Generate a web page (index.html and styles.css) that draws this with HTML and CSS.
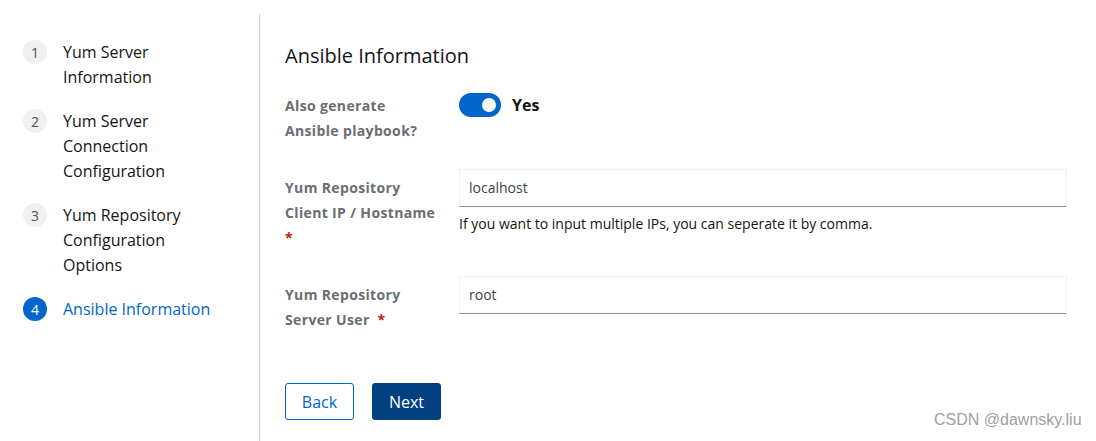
FILE: index.html
```html
<!DOCTYPE html>
<html>
<head>
<meta charset="utf-8">
<link rel="stylesheet" href="styles.css">
</head>
<body>
<div class="wizard">
  <nav class="nav">
    <ol class="steps">
      <li class="step"><span class="num">1</span><span class="label">Yum Server<br>Information</span></li>
      <li class="step"><span class="num">2</span><span class="label">Yum Server<br>Connection<br>Configuration</span></li>
      <li class="step"><span class="num">3</span><span class="label">Yum Repository<br>Configuration<br>Options</span></li>
      <li class="step current"><span class="num">4</span><span class="label">Ansible Information</span></li>
    </ol>
  </nav>
  <main class="main">
    <h1 class="title">Ansible Information</h1>
    <div class="row row-toggle">
      <div class="flabel">Also generate<br>Ansible playbook?</div>
      <div class="control toggle-wrap">
        <span class="toggle"><span class="knob"></span></span>
        <span class="yes">Yes</span>
      </div>
    </div>
    <div class="row">
      <div class="flabel pad">Yum Repository<br>Client IP / Hostname<br><span class="req">*</span></div>
      <div class="control">
        <div class="input">localhost</div>
        <div class="helper">If you want to input multiple IPs, you can seperate it by comma.</div>
      </div>
    </div>
    <div class="row">
      <div class="flabel pad">Yum Repository<br>Server User &nbsp;<span class="req">*</span></div>
      <div class="control">
        <div class="input">root</div>
      </div>
    </div>
    <div class="actions">
      <button class="btn btn-back">Back</button>
      <button class="btn btn-next">Next</button>
    </div>
  </main>
</div>
<div class="watermark">CSDN @dawnsky.liu</div>
</body>
</html>
```
FILE: styles.css
```css
html, body {
  margin: 0;
  padding: 0;
  background: #fff;
  font-family: "Open Sans", "Liberation Sans", sans-serif;
  color: #151515;
}
.wizard {
  display: flex;
  height: 441px;
  padding-top: 14px;
  box-sizing: border-box;
}
.nav {
  width: 260px;
  border-right: 1px solid #d2d2d2;
  padding-top: 26px;
  box-sizing: border-box;
  flex: none;
}
.steps {
  list-style: none;
  margin: 0;
  padding: 0 0 0 23px;
  display: flex;
  flex-direction: column;
  gap: 19px;
}
.step {
  display: flex;
  align-items: flex-start;
  gap: 16px;
  font-size: 16px;
  line-height: 25px;
  color: #151515;
}
.num {
  width: 24px;
  height: 24px;
  border-radius: 50%;
  background: #f0f0f0;
  color: #4f5255;
  font-size: 14px;
  display: flex;
  align-items: center;
  justify-content: center;
  flex: none;
}
.step.current { color: #0066cc; }
.step.current .num { background: #0066cc; color: #fff; }
.main {
  flex: 1;
  padding: 27px 29px 0 25px;
}
.title {
  margin: 0 0 22px;
  font-size: 20px;
  line-height: 30px;
  font-weight: 400;
}
.row {
  display: grid;
  grid-template-columns: 174px 1fr;
  margin-bottom: 26px;
}
.flabel {
  font-size: 14px;
  font-weight: 700;
  line-height: 25px;
  letter-spacing: 0.35px;
  color: #6a6e73;
}
.flabel.pad { padding-top: 6px; }
.req { color: #c9190b; }
.toggle-wrap {
  display: flex;
  align-items: flex-start;
  gap: 11px;
}
.toggle {
  width: 42px;
  height: 24px;
  border-radius: 12px;
  background: #0066cc;
  position: relative;
  flex: none;
}
.knob {
  position: absolute;
  right: 5px;
  top: 5px;
  width: 14px;
  height: 14px;
  border-radius: 50%;
  background: #fff;
}
.yes {
  font-size: 16px;
  font-weight: 700;
  line-height: 24px;
}
.input {
  height: 38px;
  box-sizing: border-box;
  border: 1px solid #f0f0f0;
  border-bottom: 1px solid #8a8d90;
  padding: 0 9px;
  font-size: 14px;
  line-height: 36px;
  color: #3c3f42;
}
.helper {
  margin-top: 7px;
  font-size: 14px;
  line-height: 20px;
  color: #151515;
}
.actions {
  display: flex;
  gap: 18px;
  margin-top: 51px;
}
.btn {
  width: 69px;
  height: 37px;
  border-radius: 3px;
  font-family: inherit;
  font-size: 16px;
  padding: 0;
  cursor: pointer;
}
.btn-back {
  background: #fff;
  border: 1px solid #0066cc;
  color: #0066cc;
}
.btn-next {
  background: #004080;
  border: 1px solid #004080;
  color: #fff;
}
.watermark {
  position: absolute;
  left: 934px;
  top: 411px;
  font-family: "Liberation Sans", sans-serif;
  font-size: 16px;
  color: #a0a0a0;
}
```
